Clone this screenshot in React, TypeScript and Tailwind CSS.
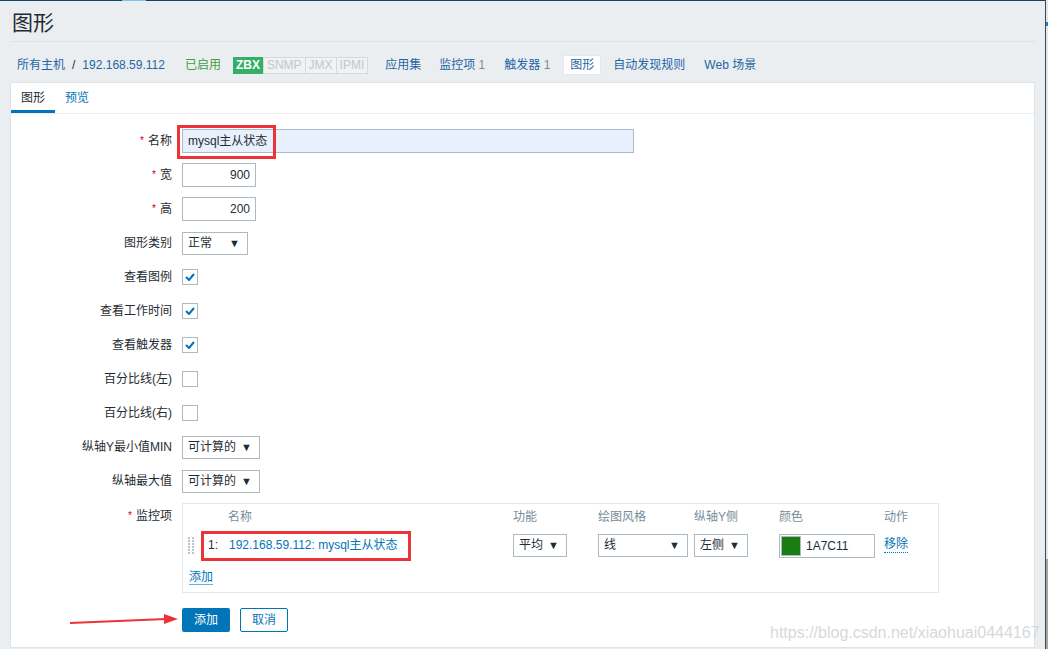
import React from "react";

const font = "font-[family-name:'Liberation_Sans','Noto_Sans_CJK_SC',sans-serif]";

const Select = ({ value, w }: { value: string; w: string }) => (
  <div className={`${w} h-[23px] border border-[#acbbc2] bg-white flex items-center justify-between pl-[5px] pr-[7px] text-[12px] text-[#1f2c33]`}>
    <span>{value}</span>
    <span className="text-[11px] text-[#1f2c33]">▼</span>
  </div>
);

const Check = ({ on }: { on?: boolean }) => (
  <div className="w-[16px] h-[16px] border border-[#acbbc2] bg-white flex items-center justify-center">
    {on && (
      <svg width="10" height="8" viewBox="0 0 10 8">
        <path d="M1 4 L4 7 L9 1" fill="none" stroke="#0275b8" strokeWidth="2" />
      </svg>
    )}
  </div>
);

const Label = ({ text, req }: { text: string; req?: boolean }) => (
  <div className="w-[161px] text-right text-[12px] text-[#1f2c33] leading-[16px]">
    {req && <span className="text-[#d40000] text-[10px] mr-[4px] align-top">*</span>}
    {text}
  </div>
);

const Row = ({ children }: { children: React.ReactNode }) => (
  <div className="flex items-center h-[24px] gap-[10px]">{children}</div>
);

const Crumb = ({ children, cls = "" }: { children: React.ReactNode; cls?: string }) => (
  <span className={`text-[12px] text-[#1f65a6] ${cls}`}>{children}</span>
);

export default function App() {
  return (
    <div className={`${font} relative w-[1048px] h-[649px] overflow-hidden bg-[#ebeef0]`}>
      {/* top strip */}
      <div className="flex h-px bg-[#0d4567]">
        <div className="ml-[122px] w-[24px] bg-[#7cc3ef]" />
      </div>

      {/* right edge */}
      <div className="absolute right-0 top-0 w-[3px] h-full border-l border-[#3c4852] bg-[#e4e7ea]">
        <div className="mt-[22px] h-[4px] bg-[#1a7fd1]" />
        <div className="absolute bottom-0 w-full h-[90px] bg-[#a8a59f]" />
      </div>

      {/* header */}
      <div className="ml-[10px] w-[1025px] h-[41px] flex items-center pl-[2px] pt-[2px] border-b border-[#dde2e6]">
        <h1 className="text-[21px] text-[#1f2c33] leading-none">图形</h1>
      </div>

      {/* breadcrumbs */}
      <div className="h-[40px] flex items-center pt-[6px] pl-[17px]">
        <Crumb>所有主机</Crumb>
        <span className="ml-[7px] text-[12px] text-[#1f2c33]">/</span>
        <Crumb cls="ml-[7px]">192.168.59.112</Crumb>
        <span className="ml-[20px] text-[12px] text-[#429e47]">已启用</span>
        <div className="ml-[12px] flex h-[17px] text-[12px] leading-[15px]">
          <span className="px-[2px] bg-[#34af67] text-white font-bold border border-[#34af67]">ZBX</span>
          <span className="px-[3px] bg-[#f0f2f3] text-[#c1c8cc] border border-[#d4dadd]">SNMP</span>
          <span className="px-[3px] bg-[#f0f2f3] text-[#c1c8cc] border border-l-0 border-[#d4dadd]">JMX</span>
          <span className="px-[3px] bg-[#f0f2f3] text-[#c1c8cc] border border-l-0 border-[#d4dadd]">IPMI</span>
        </div>
        <Crumb cls="ml-[17px]">应用集</Crumb>
        <Crumb cls="ml-[18px]">
          监控项 <span className="text-[#768d99]">1</span>
        </Crumb>
        <Crumb cls="ml-[19px]">
          触发器 <span className="text-[#768d99]">1</span>
        </Crumb>
        <span className="ml-[13px] h-[20px] px-[6px] flex items-center bg-white border border-[#e4e8eb] text-[12px] text-[#1f65a6]">
          图形
        </span>
        <Crumb cls="ml-[12px]">自动发现规则</Crumb>
        <Crumb cls="ml-[19px]">Web 场景</Crumb>
      </div>

      {/* panel */}
      <div className="ml-[10px] w-[1025px] h-[566px] bg-white border border-[#dfe4e7]">
        <div className="flex h-[31px] border-b border-[#ebeef0]">
          <div className="w-[44px] flex items-center justify-center border-b-[3px] border-[#0275b8] text-[12px] text-[#1f2c33] pt-[3px]">
            图形
          </div>
          <div className="px-[10px] flex items-center text-[12px] text-[#0275b8]">预览</div>
        </div>

        <div className="pt-[15px] flex flex-col gap-[10px]">
          <Row>
            <Label text="名称" req />
            <div className="relative">
              <div className="w-[452px] h-[24px] border border-[#acbbc2] bg-[#e8f0fe] flex items-center pl-[5px] text-[12px] text-[#1f2c33]">
                mysql主从状态
              </div>
              <div className="absolute left-[-5px] top-[-4px] w-[99px] h-[34px] border-[3px] border-[#ec3338]" />
            </div>
          </Row>
          <Row>
            <Label text="宽" req />
            <div className="w-[74px] h-[24px] border border-[#acbbc2] flex items-center justify-end pr-[5px] text-[12px] text-[#1f2c33]">900</div>
          </Row>
          <Row>
            <Label text="高" req />
            <div className="w-[74px] h-[24px] border border-[#acbbc2] flex items-center justify-end pr-[5px] text-[12px] text-[#1f2c33]">200</div>
          </Row>
          <Row>
            <Label text="图形类别" />
            <Select value="正常" w="w-[66px]" />
          </Row>
          <Row>
            <Label text="查看图例" />
            <Check on />
          </Row>
          <Row>
            <Label text="查看工作时间" />
            <Check on />
          </Row>
          <Row>
            <Label text="查看触发器" />
            <Check on />
          </Row>
          <Row>
            <Label text="百分比线(左)" />
            <Check />
          </Row>
          <Row>
            <Label text="百分比线(右)" />
            <Check />
          </Row>
          <Row>
            <Label text="纵轴Y最小值MIN" />
            <Select value="可计算的" w="w-[78px]" />
          </Row>
          <Row>
            <Label text="纵轴最大值" />
            <Select value="可计算的" w="w-[78px]" />
          </Row>

          {/* items table */}
          <div className="flex items-start gap-[10px]">
            <div className="pt-[5px]">
              <Label text="监控项" req />
            </div>
            <div className="relative w-[757px] h-[90px] border border-[#e4e8eb] pl-[5px] pt-[5px] text-[12px]">
              <div className="grid grid-cols-[40px_285px_85px_96px_85px_105px_1fr] leading-[16px] text-[#768d99]">
                <span />
                <span>名称</span>
                <span>功能</span>
                <span>绘图风格</span>
                <span>纵轴Y侧</span>
                <span>颜色</span>
                <span>动作</span>
              </div>
              <div className="mt-[7px] grid grid-cols-[40px_285px_85px_96px_85px_105px_1fr] items-center h-[24px]">
                <div className="flex items-center">
                  <svg width="6" height="19" viewBox="0 0 6 19">
                    {[0, 3, 6, 9, 12, 15].map((y) => (
                      <g key={y} fill="#b9c4ca">
                        <rect x="0" y={y + 1} width="2" height="2" />
                        <rect x="4" y={y + 1} width="2" height="2" />
                      </g>
                    ))}
                  </svg>
                  <span className="ml-[14px] text-[#1f2c33]">1:</span>
                </div>
                <span className="text-[#0275b8] pl-[1px]">192.168.59.112: mysql主从状态</span>
                <Select value="平均" w="w-[54px]" />
                <Select value="线" w="w-[90px]" />
                <Select value="左侧" w="w-[54px]" />
                <div className="w-[96px] h-[24px] border border-[#acbbc2] flex items-center pl-[1px] mt-[2px]">
                  <div className="w-[20px] h-[20px] bg-[#1a7c11] border border-[#acbbc2]" />
                  <span className="ml-[5px] text-[#1f2c33]">1A7C11</span>
                </div>
                <span className="text-[#0275b8] border-b border-dotted border-[#0275b8] w-fit leading-[15px]">移除</span>
              </div>
              <div className="mt-[12px] pl-[1px]">
                <span className="text-[#0275b8] border-b border-[#6aaee0] leading-[15px]">添加</span>
              </div>
              <div className="absolute left-[18px] top-[27px] w-[210px] h-[30px] border-[3px] border-[#ec3338]" />
            </div>
          </div>

          <div className="flex gap-[10px] pl-[171px] mt-[5px]">
            <button className="w-[48px] h-[24px] bg-[#0275b8] text-white text-[12px] rounded-[2px]">添加</button>
            <button className="w-[48px] h-[24px] bg-white border border-[#0275b8] text-[#0275b8] text-[12px] rounded-[2px]">取消</button>
          </div>
        </div>
      </div>

      {/* annotation arrow */}
      <svg className="absolute left-[66px] top-[610px]" width="116" height="20" viewBox="0 0 116 20">
        <path d="M4 13 L100 9" stroke="#ec3338" strokeWidth="2" />
        <path d="M98 4 L112 9 L98 14 Z" fill="#ec3338" />
      </svg>

      {/* watermark */}
      <div className="absolute left-[770px] top-[621px] text-[16px] text-[#d6d9db] font-[family-name:'Liberation_Sans',sans-serif]">
        https://blog.csdn.net/xiaohuai0444167
      </div>
    </div>
  );
}
